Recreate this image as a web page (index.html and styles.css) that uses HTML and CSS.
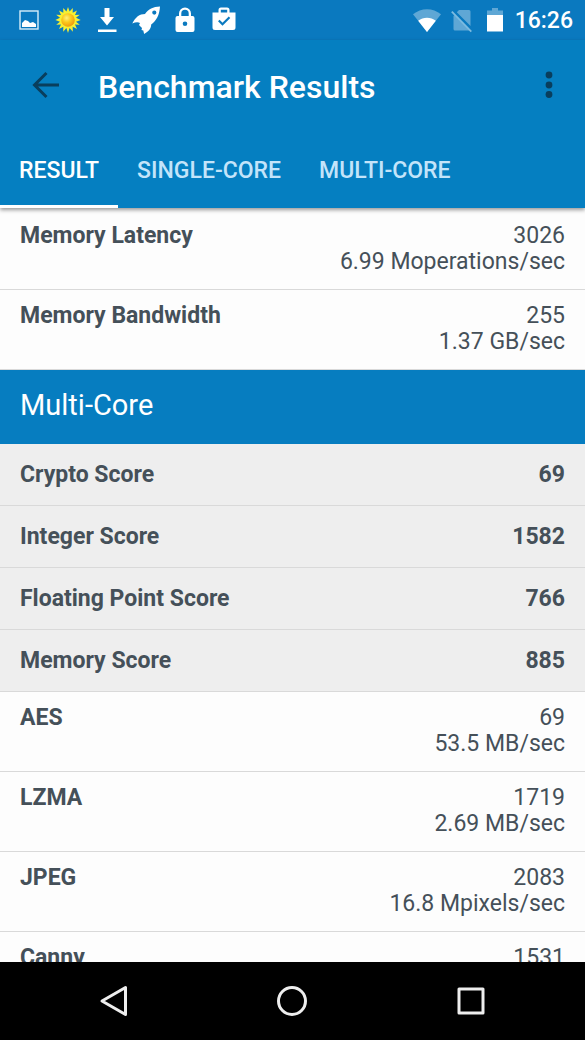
FILE: index.html
```html
<!DOCTYPE html>
<html lang="en">
<head>
    <meta charset="UTF-8">
    <meta name="viewport" content="width=device-width, initial-scale=1.0">
    <title>Benchmark Results</title>
    <link rel="stylesheet" href="styles.css">
</head>
<body>
    <div class="status-bar">
        <div class="notifications">
            <svg class="status-icon" viewBox="0 0 28 28">
                <rect x="5" y="5" width="18" height="18" fill="none" stroke="#d8eefa" stroke-width="1.4"/>
                <path d="M7 21v-4l3-3 3 1 2 2 3-1 3 2v3z" fill="#fff"/>
            </svg>
            <svg class="status-icon" viewBox="0 0 28 28">
                <defs>
                    <radialGradient id="sun" cx="0.4" cy="0.35" r="0.65">
                        <stop offset="0" stop-color="#fff27a"/>
                        <stop offset="0.5" stop-color="#fbc91c"/>
                        <stop offset="1" stop-color="#ef9a10"/>
                    </radialGradient>
                </defs>
                <path d="M14 1l1.600 4.600L18.800 2l-.1 4.800L23 4.600l-2 4.500 4.800-.3-3.800 3L26.700 14l-4.700 1.800 3.800 3-4.800-.3 2 4.500-4.300-2.200.1 4.900-3.200-3.600L14 27l-1.600-4.900L9.200 25.700l.1-4.900L5 23l2-4.500-4.800.3 3.800-3L1.300 14 6 11.800l-3.800-3 4.800.3L5 4.600l4.300 2.200L9.200 2l3.200 3.600z" fill="#f6f032"/>
                <circle cx="14" cy="14" r="6.800" fill="url(#sun)"/>
            </svg>
            <svg class="status-icon" viewBox="0 0 28 28" fill="#fff">
                <path d="M11.500 2h5v9H21l-7 8.500L7 11h4.500zM5 23.500h18.500V26H5z"/>
            </svg>
            <svg class="status-icon" viewBox="0 0 28 28" fill="#fff">
                <path fill-rule="evenodd" d="M28 .5c-7 .2-11.500 2.500-15 7.500C7.500 8 3.500 11 .3 17.500c3-1.300 5.700-1.700 7.700-.5l-1 2 3 3-.5 2 1.800.6.8 3.400c4.500-2.500 6.900-5 7.100-9.500C24.500 14.500 27.500 9 28 .5zM22.300 4.500a2.100 2.100 0 1 1 0 4.200 2.100 2.100 0 0 1 0-4.200z"/>
            </svg>
            <svg class="status-icon" viewBox="0 0 28 28" fill="#fff">
                <path fill-rule="evenodd" d="M6.500 10H8V7.500a6 6 0 0 1 12 0V10h1.500a2 2 0 0 1 2 2v12a2 2 0 0 1-2 2h-15a2 2 0 0 1-2-2V12a2 2 0 0 1 2-2zm3.800 0h7.400V7.500a3.700 3.700 0 0 0-7.400 0zM14 15.500a2.300 2.300 0 1 0 0 4.600 2.300 2.300 0 0 0 0-4.600z"/>
            </svg>
            <svg class="status-icon" viewBox="0 0 28 28">
                <path fill="#fff" fill-rule="evenodd" d="M2.500 6.500h6V4a2.500 2.500 0 0 1 2.500-2.500h6A2.500 2.500 0 0 1 19.500 4v2.500h6V21.500a2.500 2.500 0 0 1-2.500 2.500H5a2.500 2.500 0 0 1-2.500-2.500zm8.300 0h6.400V3.800h-6.400z"/>
                <path d="M8.800 14.500l3.700 3.700 7-7" fill="none" stroke="#0a79bf" stroke-width="2.200"/>
            </svg>
        </div>
        <div class="system">
            <svg class="status-icon" viewBox="0 0 28 28">
                <path d="M14 26L0 8.300C8 1.400 20 1.400 28 8.300z" fill="#fff" fill-opacity="0.35"/>
                <path d="M14 26L5.200 14.800c5-4.200 12.600-4.200 17.600 0z" fill="#fff"/>
            </svg>
            <svg class="status-icon" viewBox="0 0 28 28">
                <path d="M12 4h10a1.500 1.500 0 0 1 1.500 1.500V20L9.800 6.300zM7.500 9L23 24.500H8A1.500 1.500 0 0 1 6.500 23V10z" fill="#fff" fill-opacity="0.35"/>
                <path d="M4.800 5.600l19.500 20" stroke="#7dbbe0" stroke-width="1.800"/>
            </svg>
            <svg class="status-icon" viewBox="0 0 28 28">
                <path d="M6 9V4.500h5V2h6v2.500h5V9z" fill="#fff" fill-opacity="0.35"/>
                <path d="M6 9h16v16.500H6z" fill="#fff"/>
            </svg>
            <span class="clock">16:26</span>
        </div>
    </div>

    <header class="app-bar">
        <div class="toolbar">
            <button type="button" class="icon-button" aria-label="Back">
                <svg class="toolbar-icon" viewBox="0 0 40 40" fill="none" stroke="#093e5d" stroke-width="3">
                    <path d="M33 19H9M20.500 7L8.500 19l12 12"/>
                </svg>
            </button>
            <h1>Benchmark Results</h1>
            <button type="button" class="icon-button" aria-label="More options">
                <svg class="toolbar-icon" viewBox="0 0 40 40" fill="#093e5d">
                    <circle cx="20" cy="9" r="3.400"/>
                    <circle cx="20" cy="19" r="3.400"/>
                    <circle cx="20" cy="28.500" r="3.400"/>
                </svg>
            </button>
        </div>
        <nav class="tabs">
            <a href="#result" class="tab active">RESULT</a>
            <a href="#single-core" class="tab">SINGLE-CORE</a>
            <a href="#multi-core" class="tab">MULTI-CORE</a>
        </nav>
    </header>

    <main class="results" id="result">
        <table class="tests">
            <tr>
                <th scope="row">Memory Latency</th>
                <td>3026<br>6.99 Moperations/sec</td>
            </tr>
            <tr>
                <th scope="row">Memory Bandwidth</th>
                <td>255<br>1.37 GB/sec</td>
            </tr>
        </table>

        <h2>Multi-Core</h2>

        <table class="scores">
            <tr>
                <th scope="row">Crypto Score</th>
                <td>69</td>
            </tr>
            <tr>
                <th scope="row">Integer Score</th>
                <td>1582</td>
            </tr>
            <tr>
                <th scope="row">Floating Point Score</th>
                <td>766</td>
            </tr>
            <tr>
                <th scope="row">Memory Score</th>
                <td>885</td>
            </tr>
        </table>

        <table class="tests">
            <tr>
                <th scope="row">AES</th>
                <td>69<br>53.5 MB/sec</td>
            </tr>
            <tr>
                <th scope="row">LZMA</th>
                <td>1719<br>2.69 MB/sec</td>
            </tr>
            <tr>
                <th scope="row">JPEG</th>
                <td>2083<br>16.8 Mpixels/sec</td>
            </tr>
            <tr>
                <th scope="row">Canny</th>
                <td>1531</td>
            </tr>
        </table>
    </main>

    <div class="nav-bar">
        <button type="button" class="nav-button" aria-label="Back">
            <svg class="nav-icon" viewBox="0 0 36 36">
                <path d="M29.500 4.500v27L6 18z"/>
            </svg>
        </button>
        <button type="button" class="nav-button" aria-label="Home">
            <svg class="nav-icon" viewBox="0 0 36 36">
                <circle cx="18" cy="18" r="13.500"/>
            </svg>
        </button>
        <button type="button" class="nav-button" aria-label="Recent apps">
            <svg class="nav-icon" viewBox="0 0 36 36">
                <rect x="6" y="6" width="24" height="24"/>
            </svg>
        </button>
    </div>
</body>
</html>
```

FILE: styles.css
```css
* {
    box-sizing: border-box;
}
body {
    margin: 0;
    height: 100vh;
    display: flex;
    flex-direction: column;
    overflow: hidden;
    font-family: Roboto, sans-serif;
    font-size: 23px;
    line-height: 26px;
    color: #455059;
    background-color: #fdfdfd;
}
button {
    padding: 0;
    border: none;
    background: none;
    cursor: pointer;
}
svg {
    display: block;
}

/* Status bar */
.status-bar {
    display: flex;
    justify-content: space-between;
    flex-shrink: 0;
    height: 40px;
    padding: 0 12px 0 15px;
    background-color: #0a79bf;
}
.notifications, .system {
    display: flex;
    align-items: center;
}
.notifications {
    gap: 11px;
}
.system {
    gap: 6px;
}
.status-icon {
    width: 28px;
    height: 28px;
}
.clock {
    padding-top: 2px;
    font-size: 23px;
    font-weight: 500;
    color: #fff;
}

/* App bar */
.app-bar {
    position: relative;
    z-index: 1;
    flex-shrink: 0;
    background-color: #057fc1;
    box-shadow: 0 2px 4px rgba(0, 0, 0, 0.4);
}
.toolbar {
    display: flex;
    align-items: center;
    height: 92px;
    padding: 0 16px 0 26px;
}
.toolbar-icon {
    width: 40px;
    height: 40px;
}
h1 {
    flex: 1;
    margin: 0 0 0 32px;
    padding-top: 2px;
    font-size: 32px;
    line-height: 40px;
    font-weight: 500;
    color: #fff;
}
.tabs {
    display: flex;
    height: 76px;
}
.tab {
    display: flex;
    align-items: center;
    padding: 4px 19px 0;
    border-bottom: 3px solid transparent;
    font-weight: 500;
    color: #c3e4fa;
    text-decoration: none;
}
.tab.active {
    color: #fff;
    border-bottom-color: #fff;
}

/* Results list */
.results {
    flex: 1;
    min-height: 0;
    padding-top: 2px;
    overflow: hidden;
}
h2 {
    margin: 0;
    padding: 15px 20px 19px;
    font-size: 29px;
    line-height: 40px;
    font-weight: 400;
    color: #fff;
    background-color: #067dc0;
}
table {
    width: 100%;
    border-spacing: 0;
}
th, td {
    border-bottom: 1px solid #d9d9d9;
    vertical-align: top;
}
th {
    text-align: left;
    font-weight: 700;
}
td {
    text-align: right;
}
.tests th, .tests td {
    padding: 13px 20px 14px;
}
.scores {
    background-color: #eee;
}
.scores th, .scores td {
    padding: 18px 20px 17px;
    font-weight: 700;
}

/* Navigation bar */
.nav-bar {
    display: grid;
    grid-template-columns: repeat(3, 1fr);
    flex-shrink: 0;
    height: 78px;
    padding: 0 25px;
    background-color: #000;
}
.nav-button {
    display: flex;
    align-items: center;
    justify-content: center;
}
.nav-icon {
    width: 36px;
    height: 36px;
    fill: none;
    stroke: #eee;
    stroke-width: 3;
    stroke-linejoin: round;
}
```
